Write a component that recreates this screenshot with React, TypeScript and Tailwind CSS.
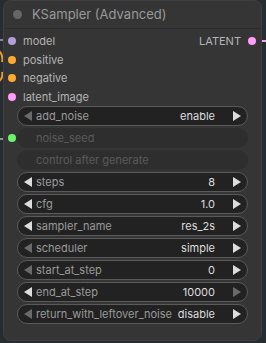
import React from 'react';

type Widget = {
  name: string;
  value?: string;
  leftDim?: boolean;
  rightDim?: boolean;
  disabled?: boolean;
};

const inputs = [
  { name: 'model', color: 'bg-[#b39ddb]' },
  { name: 'positive', color: 'bg-[#ffa931]' },
  { name: 'negative', color: 'bg-[#ffa931]' },
  { name: 'latent_image', color: 'bg-[#ff9cf9]' },
];

const widgets: Widget[] = [
  { name: 'add_noise', value: 'enable', leftDim: true },
  { name: 'noise_seed', disabled: true },
  { name: 'control after generate', disabled: true },
  { name: 'steps', value: '8' },
  { name: 'cfg', value: '1.0' },
  { name: 'sampler_name', value: 'res_2s' },
  { name: 'scheduler', value: 'simple', leftDim: true },
  { name: 'start_at_step', value: '0', leftDim: true },
  { name: 'end_at_step', value: '10000', rightDim: true },
  { name: 'return_with_leftover_noise', value: 'disable', leftDim: true },
];

function Arrow({ dir, dim }: { dir: 'left' | 'right'; dim?: boolean }) {
  return (
    <svg width="8" height="10" viewBox="0 0 8 10" className="shrink-0">
      <polygon
        points={dir === 'left' ? '8,0 8,10 0,5' : '0,0 0,10 8,5'}
        fill={dim ? '#6a6a6a' : '#dddddd'}
      />
    </svg>
  );
}

function WidgetRow({ w }: { w: Widget }) {
  if (w.disabled) {
    return (
      <div className="h-5 rounded-full bg-[#2e2e2e] flex items-center pl-[19px] text-[11px] text-[#5a5a5a]">
        {w.name}
      </div>
    );
  }
  return (
    <div className="h-5 rounded-full bg-[#222222] border border-[#5a5a5a] flex items-center pl-[6px] pr-[6px] text-[11px]">
      <Arrow dir="left" dim={w.leftDim} />
      <span className="ml-[4px] text-[#9a9a9a] whitespace-nowrap">{w.name}</span>
      <span className="ml-auto text-[#dddddd] whitespace-nowrap pl-1">{w.value}</span>
      <span className="ml-[18px] flex"><Arrow dir="right" dim={w.rightDim} /></span>
    </div>
  );
}

export default function App() {
  return (
    <div
      className="relative w-[266px] h-[343px] bg-[#272c31] overflow-hidden"
      style={{ fontFamily: 'Inter, "Noto Sans", sans-serif' }}
    >
      {/* wires coming in / out */}
      <svg className="absolute left-0 top-0" width="266" height="343">
        <path d="M-4 40 L4 40" stroke="#8f86a8" strokeWidth="2" fill="none" />
        <path d="M-6 48 Q4 52 2 62" stroke="#e09a2a" strokeWidth="2" fill="none" />
        <path d="M-6 84 Q4 80 2 72" stroke="#e09a2a" strokeWidth="2" fill="none" />
        <path d="M-2 139 L4 139" stroke="#8a9a8a" strokeWidth="2" fill="none" />
        <path d="M258 41 L268 41" stroke="#ff9cf9" strokeWidth="2" fill="none" />
      </svg>

      <div className="absolute left-[3px] top-0 w-[259px] h-[341px] rounded-[8px] bg-[#353535] border border-[#3f3f3f] flex flex-col">
        <div className="h-[28px] flex items-center border-b border-[#2c2c2c] shrink-0">
          <span className="ml-[9px] w-[9px] h-[9px] rounded-full bg-[#666666]" />
          <span className="ml-[10px] text-[13px] text-[#999999]">KSampler (Advanced)</span>
        </div>

        <div className="relative pt-[3px]">
          {inputs.map((inp) => (
            <div key={inp.name} className="h-[18.6px] flex items-center">
              <span className={`ml-[4px] w-[8px] h-[8px] rounded-full ${inp.color}`} />
              <span className="ml-[7px] text-[11px] text-[#b4b4b4]">{inp.name}</span>
            </div>
          ))}
          <div className="absolute right-[5px] top-[3px] h-[18.6px] flex items-center">
            <span className="text-[11px] text-[#b4b4b4]">LATENT</span>
            <span className="ml-[7px] w-[8px] h-[8px] rounded-full bg-[#ff9cf9]" />
          </div>
        </div>

        <div className="relative px-[13px] flex flex-col gap-[2px]">
          <span className="absolute left-[4px] top-[28px] w-[8px] h-[8px] rounded-full bg-[#6cf46c]" />
          {widgets.map((w) => (
            <WidgetRow key={w.name} w={w} />
          ))}
        </div>
      </div>
    </div>
  );
}
